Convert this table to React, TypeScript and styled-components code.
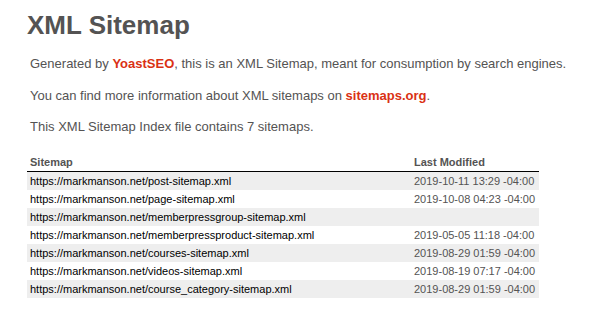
import React from 'react';
import styled, { createGlobalStyle } from 'styled-components';

const GlobalStyle = createGlobalStyle`
  html, body {
    margin: 0;
    padding: 0;
    background: #fff;
  }
  body {
    font-family: "Liberation Sans", Arial, Helvetica, sans-serif;
    font-size: 13px;
    color: #545353;
  }
`;

const Content = styled.div`
  padding: 10px 0 0 27px;
`;

const Title = styled.h1`
  margin: 0 0 16px;
  font-size: 26px;
  font-weight: bold;
  line-height: 30px;
`;

const Expl = styled.p`
  margin: 16px 3px;
  line-height: 15.6px;
  white-space: nowrap;
`;

const ExplLink = styled.a`
  color: #da3114;
  font-weight: bold;
  text-decoration: none;
`;

const Table = styled.table`
  width: 512px;
  border: none;
  border-collapse: collapse;
  margin-top: 18px;
`;

const Th = styled.th<{ $width: string }>`
  width: ${(p) => p.$width};
  text-align: left;
  font-size: 11px;
  line-height: 12px;
  padding: 3px;
  border-bottom: 1px solid #000;
  color: #545353;
`;

const Row = styled.tr`
  &:nth-child(odd) td {
    background-color: #eee;
  }
`;

const Td = styled.td`
  font-size: 11px;
  line-height: 12px;
  padding: 3px;
  white-space: nowrap;
`;

const UrlLink = styled.a`
  color: #000;
  text-decoration: none;
`;

const sitemaps = [
  { loc: 'https://markmanson.net/post-sitemap.xml', mod: '2019-10-11 13:29 -04:00' },
  { loc: 'https://markmanson.net/page-sitemap.xml', mod: '2019-10-08 04:23 -04:00' },
  { loc: 'https://markmanson.net/memberpressgroup-sitemap.xml', mod: '' },
  { loc: 'https://markmanson.net/memberpressproduct-sitemap.xml', mod: '2019-05-05 11:18 -04:00' },
  { loc: 'https://markmanson.net/courses-sitemap.xml', mod: '2019-08-29 01:59 -04:00' },
  { loc: 'https://markmanson.net/videos-sitemap.xml', mod: '2019-08-19 07:17 -04:00' },
  { loc: 'https://markmanson.net/course_category-sitemap.xml', mod: '2019-08-29 01:59 -04:00' },
];

const App: React.FC = () => {
  return (
    <>
      <GlobalStyle />
      <Content>
        <Title>XML Sitemap</Title>
        <Expl>
          Generated by <ExplLink href="#">YoastSEO</ExplLink>, this is an XML Sitemap, meant for consumption by search engines.
        </Expl>
        <Expl>
          You can find more information about XML sitemaps on <ExplLink href="#">sitemaps.org</ExplLink>.
        </Expl>
        <Expl>This XML Sitemap Index file contains {sitemaps.length} sitemaps.</Expl>
        <Table>
          <thead>
            <tr>
              <Th $width="75%">Sitemap</Th>
              <Th $width="25%">Last Modified</Th>
            </tr>
          </thead>
          <tbody>
            {sitemaps.map((s) => (
              <Row key={s.loc}>
                <Td>
                  <UrlLink href="#">{s.loc}</UrlLink>
                </Td>
                <Td>{s.mod}</Td>
              </Row>
            ))}
          </tbody>
        </Table>
      </Content>
    </>
  );
};

export default App;
